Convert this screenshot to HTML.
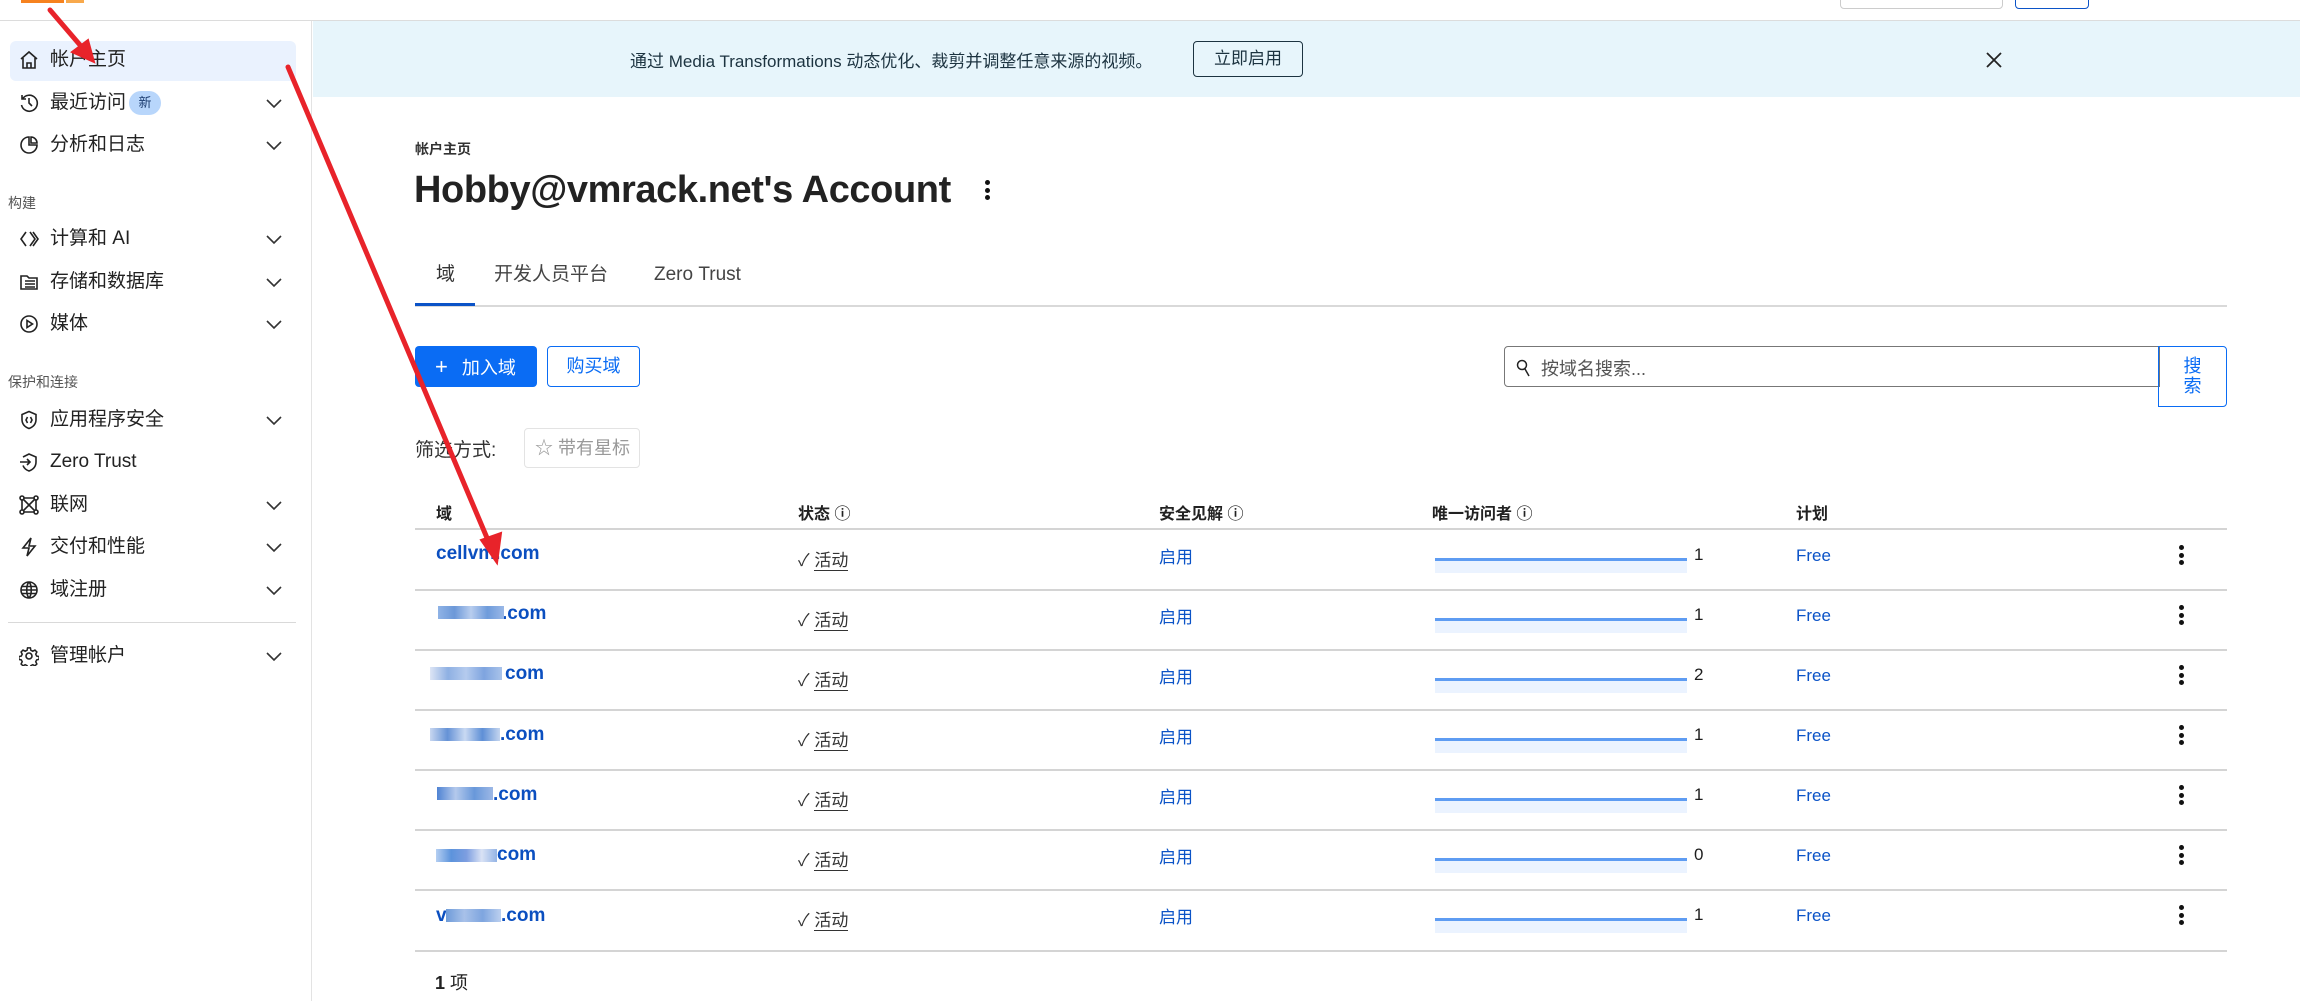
<!DOCTYPE html>
<html><head><meta charset="utf-8">
<style>
*{margin:0;padding:0;box-sizing:border-box}
body{width:2300px;height:1001px;overflow:hidden;background:#fff;font-family:"Liberation Sans","Noto Sans CJK SC",sans-serif;color:#1d1d1d;position:relative}
.a{position:absolute;white-space:nowrap}
.side{position:absolute;left:0;top:21px;width:312px;height:980px;border-right:1px solid #e3e3e3}
.it{position:absolute;left:50px;font-size:19px;line-height:24px;color:#222}
.ic{position:absolute;left:19px;width:20px;height:20px}
.chev{position:absolute;left:266px;width:16px;height:10px}
.sec{position:absolute;left:8px;font-size:14px;color:#555}
.th{font-size:16px;font-weight:600;color:#222;line-height:20px}
.hl{position:absolute;left:415px;width:1812px;height:2px;background:#d4d4d4}
.dom{font-size:19px;font-weight:700;color:#0b4fc0;line-height:24px}
.blu{color:#0b53c7;font-size:17px;line-height:22px}
.spark{position:absolute;left:1435px;width:252px;height:15px;background:#ebf3ff;border-top:3px solid #5e9cf2}
.kb{position:absolute;left:2179px;width:5px}
.kb i{display:block;width:5px;height:5px;border-radius:50%;background:#111;margin-bottom:2.5px}
.pix{position:absolute;height:13px}
.tab{font-size:19px;line-height:26px;top:262px}
</style></head><body>
<div class="a" style="left:21px;top:0;width:43px;height:3px;background:#f6821f"></div>
<div class="a" style="left:66px;top:0;width:18px;height:3px;background:#f8a94c"></div>
<div class="a" style="left:1840px;top:-4px;width:163px;height:13px;border:1px solid #ccc;border-radius:4px"></div>
<div class="a" style="left:2015px;top:-4px;width:74px;height:13px;border:1px solid #0b53c7;border-radius:4px"></div>
<div class="a" style="left:0;top:20px;width:2300px;height:1px;background:#dcdcdc"></div>

<div class="side">
 <div class="a" style="left:10px;top:20px;width:286px;height:40px;background:#eaf2fe;border-radius:6px"></div>
 <svg class="ic" style="top:29px" viewBox="0 0 20 20" fill="none" stroke="#222" stroke-width="1.6"><path d="M2 9L10 2l8 7M4 8v10h12V8M8 18v-5h4v5"/></svg>
 <div class="it" style="top:27px">帐户主页</div>
 <svg class="ic" style="top:72px" viewBox="0 0 20 20" fill="none" stroke="#222" stroke-width="1.6"><path d="M3.5 6A8 8 0 1 1 2.5 12M3 2v4h4M10 5v5l3 3"/></svg>
 <div class="it" style="top:70px">最近访问</div>
 <div class="a" style="left:129px;top:70px;width:32px;height:24px;border-radius:12px;background:#b8d6fb;font-size:13px;color:#1c3d70;text-align:center;line-height:24px">新</div>
 <svg class="ic" style="top:114px" viewBox="0 0 20 20" fill="none" stroke="#222" stroke-width="1.6"><path d="M10 2a8 8 0 1 0 8 8h-8z M12 2v6h6a6 6 0 0 0-6-6z"/></svg>
 <div class="it" style="top:112px">分析和日志</div>
 <div class="sec" style="top:172px">构建</div>
 <svg class="ic" style="top:208px" viewBox="0 0 20 20" fill="none" stroke="#222" stroke-width="1.6"><path d="M7 3L2 10l5 7M11 3l5 7-5 7M14 3l5 7-5 7"/></svg>
 <div class="it" style="top:206px">计算和 AI</div>
 <svg class="ic" style="top:251px" viewBox="0 0 20 20" fill="none" stroke="#222" stroke-width="1.6"><path d="M2 4h6l2 2h8v11H2z M6 9h10M6 12h10M6 15h10"/></svg>
 <div class="it" style="top:249px">存储和数据库</div>
 <svg class="ic" style="top:293px" viewBox="0 0 20 20" fill="none" stroke="#222" stroke-width="1.6"><circle cx="10" cy="10" r="8"/><path d="M8 6.5v7l5.5-3.5z"/></svg>
 <div class="it" style="top:291px">媒体</div>
 <div class="sec" style="top:351px">保护和连接</div>
 <svg class="ic" style="top:389px" viewBox="0 0 20 20" fill="none" stroke="#222" stroke-width="1.6"><path d="M10 1.5l7 3v5c0 4.5-3 7.5-7 9-4-1.5-7-4.5-7-9v-5z M8.5 7l-1.5 3 1.5 3M11.5 7l1.5 3-1.5 3"/></svg>
 <div class="it" style="top:387px">应用程序安全</div>
 <svg class="ic" style="top:431px" viewBox="0 0 20 20" fill="none" stroke="#222" stroke-width="1.6"><path d="M4 5l6-3 7 3v5c0 4.5-3 7.5-7 9-3-1-5-3-6-5.5 M1 10h10M8 7l3 3-3 3"/></svg>
 <div class="it" style="top:429px">Zero Trust</div>
 <svg class="ic" style="top:474px" viewBox="0 0 20 20" fill="none" stroke="#222" stroke-width="1.6"><circle cx="3" cy="3" r="2"/><circle cx="17" cy="3" r="2"/><circle cx="3" cy="17" r="2"/><circle cx="17" cy="17" r="2"/><path d="M5 3h10M3 5v10M17 5v10M5 17h10M4.5 4.5l11 11M15.5 4.5l-11 11"/></svg>
 <div class="it" style="top:472px">联网</div>
 <svg class="ic" style="top:516px" viewBox="0 0 20 20" fill="none" stroke="#222" stroke-width="1.6"><path d="M12 1L4 11h6l-2 8 8-10h-6z"/></svg>
 <div class="it" style="top:514px">交付和性能</div>
 <svg class="ic" style="top:559px" viewBox="0 0 20 20" fill="none" stroke="#222" stroke-width="1.6"><circle cx="10" cy="10" r="8"/><path d="M2 10h16M3 6.5h14M3 13.5h14M10 2c-3 3-3 13 0 16M10 2c3 3 3 13 0 16"/></svg>
 <div class="it" style="top:557px">域注册</div>
 <div class="a" style="left:8px;top:601px;width:288px;height:1px;background:#d9d9d9"></div>
 <svg class="ic" style="top:625px" viewBox="0 0 20 20" fill="none" stroke="#222" stroke-width="1.6"><circle cx="10" cy="10" r="3"/><path d="M8.5 1.5h3l.5 2.5 2 1 2.3-1.2 2 2-1.2 2.3 1 2 2.5.5v3l-2.5.5-1 2 1.2 2.3-2 2-2.3-1.2-2 1-.5 2.5h-3l-.5-2.5-2-1-2.3 1.2-2-2 1.2-2.3-1-2-2.5-.5v-3l2.5-.5 1-2-1.2-2.3 2-2 2.3 1.2 2-1z" transform="scale(.95) translate(.5 .5)"/></svg>
 <div class="it" style="top:623px">管理帐户</div>
 <svg class="chev" style="top:78px" viewBox="0 0 16 10" fill="none" stroke="#333" stroke-width="1.6"><path d="M1 1l7 7 7-7"/></svg>
 <svg class="chev" style="top:120px" viewBox="0 0 16 10" fill="none" stroke="#333" stroke-width="1.6"><path d="M1 1l7 7 7-7"/></svg>
 <svg class="chev" style="top:214px" viewBox="0 0 16 10" fill="none" stroke="#333" stroke-width="1.6"><path d="M1 1l7 7 7-7"/></svg>
 <svg class="chev" style="top:257px" viewBox="0 0 16 10" fill="none" stroke="#333" stroke-width="1.6"><path d="M1 1l7 7 7-7"/></svg>
 <svg class="chev" style="top:299px" viewBox="0 0 16 10" fill="none" stroke="#333" stroke-width="1.6"><path d="M1 1l7 7 7-7"/></svg>
 <svg class="chev" style="top:395px" viewBox="0 0 16 10" fill="none" stroke="#333" stroke-width="1.6"><path d="M1 1l7 7 7-7"/></svg>
 <svg class="chev" style="top:480px" viewBox="0 0 16 10" fill="none" stroke="#333" stroke-width="1.6"><path d="M1 1l7 7 7-7"/></svg>
 <svg class="chev" style="top:522px" viewBox="0 0 16 10" fill="none" stroke="#333" stroke-width="1.6"><path d="M1 1l7 7 7-7"/></svg>
 <svg class="chev" style="top:565px" viewBox="0 0 16 10" fill="none" stroke="#333" stroke-width="1.6"><path d="M1 1l7 7 7-7"/></svg>
 <svg class="chev" style="top:631px" viewBox="0 0 16 10" fill="none" stroke="#333" stroke-width="1.6"><path d="M1 1l7 7 7-7"/></svg>
</div>

<div class="a" style="left:313px;top:21px;width:1987px;height:76px;background:#e7f5fb"></div>
<div class="a" style="left:630px;top:47px;font-size:17px;color:#1c3340">通过 Media Transformations 动态优化、裁剪并调整任意来源的视频。</div>
<div class="a" style="left:1193px;top:41px;width:110px;height:36px;border:1px solid #1c3340;border-radius:4px;font-size:17px;text-align:center;line-height:34px;color:#1c3340">立即启用</div>
<svg class="a" style="left:1985px;top:51px" width="18" height="18" viewBox="0 0 18 18" stroke="#222" stroke-width="1.8"><path d="M2 2l14 14M16 2L2 16"/></svg>

<div class="a" style="left:415px;top:139px;font-size:14px;font-weight:600;color:#333">帐户主页</div>
<div class="a" style="left:414px;top:168px;font-size:38px;line-height:44px;font-weight:700;color:#222;letter-spacing:-0.4px">Hobby@vmrack.net's Account</div>
<div class="kb" style="left:985px;top:180px"><i></i><i></i><i></i></div>

<div class="a tab" style="left:436px;color:#333">域</div>
<div class="a tab" style="left:494px;color:#444">开发人员平台</div>
<div class="a tab" style="left:654px;color:#444">Zero&nbsp;Trust</div>
<div class="a" style="left:415px;top:305px;width:1812px;height:2px;background:#d9d9d9"></div>
<div class="a" style="left:415px;top:303px;width:60px;height:3px;background:#0b53c7"></div>

<div class="a" style="left:415px;top:346px;width:122px;height:41px;background:#0a6cf4;border-radius:4px;color:#fff;font-size:18px;line-height:41px"><span style="margin-left:20px;font-size:22px">+</span><span style="margin-left:14px">加入域</span></div>
<div class="a" style="left:547px;top:346px;width:93px;height:41px;border:1.5px solid #0a6cf4;border-radius:4px;color:#0a6cf4;font-size:18px;line-height:38px;text-align:center">购买域</div>
<div class="a" style="left:1504px;top:346px;width:656px;height:41px;border:1.5px solid #777;border-radius:4px 0 0 4px"></div>
<svg class="a" style="left:1516px;top:359px" width="14" height="18" viewBox="0 0 14 18" fill="none" stroke="#222" stroke-width="1.5"><circle cx="6" cy="6" r="4.5"/><path d="M9 10l4 7"/></svg>
<div class="a" style="left:1541px;top:355px;font-size:18px;color:#555">按域名搜索...</div>
<div class="a" style="left:2158px;top:346px;width:69px;height:61px;border:1.5px solid #0a6cf4;border-radius:0 4px 4px 0;color:#0a6cf4;font-size:18px;text-align:center;line-height:20px;padding-top:9px;white-space:normal">搜<br>索</div>

<div class="a" style="left:415px;top:435px;font-size:19px;color:#333">筛选方式:</div>
<div class="a" style="left:524px;top:428px;width:116px;height:40px;border:1px solid #e3e3e3;border-radius:4px;font-size:18px;color:#999;line-height:38px;padding-left:10px">☆ 带有星标</div>

<div class="a th" style="left:436px;top:505px">域</div>
<div class="a th" style="left:798px;top:505px">状态 ⓘ</div>
<div class="a th" style="left:1159px;top:505px">安全见解 ⓘ</div>
<div class="a th" style="left:1432px;top:505px">唯一访问者 ⓘ</div>
<div class="a th" style="left:1796px;top:505px">计划</div>
<div class="hl" style="top:528px"></div>
<div class="hl" style="top:589px"></div>
<div class="hl" style="top:649px"></div>
<div class="hl" style="top:709px"></div>
<div class="hl" style="top:769px"></div>
<div class="hl" style="top:829px"></div>
<div class="hl" style="top:889px"></div>
<div class="hl" style="top:950px"></div>

<div class="a dom" style="left:436px;top:542px">cellvm.com</div>
<div class="a dom" style="left:502px;top:602px">.com</div>
<div class="pix" style="left:438px;top:606px;width:66px;background:linear-gradient(90deg,#8fb3e6,#6c98d8,#b8cdee,#6e9bdb,#9ab8e7)"></div>
<div class="a dom" style="left:505px;top:662px">com</div>
<div class="pix" style="left:430px;top:667px;width:72px;background:linear-gradient(90deg,#dde5f5,#8eb0e3,#b5cbee,#7ea4df,#a9c3ea)"></div>
<div class="a dom" style="left:500px;top:723px">.com</div>
<div class="pix" style="left:430px;top:728px;width:70px;background:linear-gradient(90deg,#c8d7f0,#6592d6,#c9d9f2,#5e8fd6,#c4d5ef)"></div>
<div class="a dom" style="left:493px;top:783px">.com</div>
<div class="pix" style="left:437px;top:787px;width:56px;background:linear-gradient(90deg,#4f83d3,#b4c9ec,#6898da,#9db8e6)"></div>
<div class="a dom" style="left:497px;top:843px">com</div>
<div class="pix" style="left:436px;top:849px;width:61px;background:linear-gradient(90deg,#b5cff2,#5c93dc,#7d9ee0,#d9e2f5,#94b4e5)"></div>
<div class="a dom" style="left:436px;top:904px">v</div>
<div class="a dom" style="left:501px;top:904px">.com</div>
<div class="pix" style="left:446px;top:909px;width:55px;background:linear-gradient(90deg,#6d9bd9,#a8c1e9,#7ea5df,#bcd0ef)"></div>

<div class="a" style="left:798px;top:546px;font-size:17px;color:#333">✓ <span style="border-bottom:1px solid #333">活动</span></div>
<div class="a" style="left:798px;top:606px;font-size:17px;color:#333">✓ <span style="border-bottom:1px solid #333">活动</span></div>
<div class="a" style="left:798px;top:666px;font-size:17px;color:#333">✓ <span style="border-bottom:1px solid #333">活动</span></div>
<div class="a" style="left:798px;top:726px;font-size:17px;color:#333">✓ <span style="border-bottom:1px solid #333">活动</span></div>
<div class="a" style="left:798px;top:786px;font-size:17px;color:#333">✓ <span style="border-bottom:1px solid #333">活动</span></div>
<div class="a" style="left:798px;top:846px;font-size:17px;color:#333">✓ <span style="border-bottom:1px solid #333">活动</span></div>
<div class="a" style="left:798px;top:906px;font-size:17px;color:#333">✓ <span style="border-bottom:1px solid #333">活动</span></div>

<div class="a blu" style="left:1159px;top:547px">启用</div>
<div class="a blu" style="left:1159px;top:607px">启用</div>
<div class="a blu" style="left:1159px;top:667px">启用</div>
<div class="a blu" style="left:1159px;top:727px">启用</div>
<div class="a blu" style="left:1159px;top:787px">启用</div>
<div class="a blu" style="left:1159px;top:847px">启用</div>
<div class="a blu" style="left:1159px;top:907px">启用</div>

<div class="spark" style="top:558px"></div><div class="a" style="left:1694px;top:545px;font-size:17px">1</div>
<div class="spark" style="top:618px"></div><div class="a" style="left:1694px;top:605px;font-size:17px">1</div>
<div class="spark" style="top:678px"></div><div class="a" style="left:1694px;top:665px;font-size:17px">2</div>
<div class="spark" style="top:738px"></div><div class="a" style="left:1694px;top:725px;font-size:17px">1</div>
<div class="spark" style="top:798px"></div><div class="a" style="left:1694px;top:785px;font-size:17px">1</div>
<div class="spark" style="top:858px"></div><div class="a" style="left:1694px;top:845px;font-size:17px">0</div>
<div class="spark" style="top:918px"></div><div class="a" style="left:1694px;top:905px;font-size:17px">1</div>

<div class="a blu" style="left:1796px;top:545px">Free</div>
<div class="a blu" style="left:1796px;top:605px">Free</div>
<div class="a blu" style="left:1796px;top:665px">Free</div>
<div class="a blu" style="left:1796px;top:725px">Free</div>
<div class="a blu" style="left:1796px;top:785px">Free</div>
<div class="a blu" style="left:1796px;top:845px">Free</div>
<div class="a blu" style="left:1796px;top:905px">Free</div>

<div class="kb" style="top:545px"><i></i><i></i><i></i></div>
<div class="kb" style="top:605px"><i></i><i></i><i></i></div>
<div class="kb" style="top:665px"><i></i><i></i><i></i></div>
<div class="kb" style="top:725px"><i></i><i></i><i></i></div>
<div class="kb" style="top:785px"><i></i><i></i><i></i></div>
<div class="kb" style="top:845px"><i></i><i></i><i></i></div>
<div class="kb" style="top:905px"><i></i><i></i><i></i></div>

<div class="a" style="left:435px;top:969px;font-size:18px;color:#222"><b>1</b> 项</div>

<svg class="a" style="left:0;top:0" width="2300" height="1001">
 <g stroke="#e8232a" stroke-width="5" stroke-linecap="round" fill="#e8232a">
  <line x1="50" y1="10" x2="86" y2="52"/>
  <polygon points="94,62 72,52 88,40" stroke-width="2"/>
  <line x1="288" y1="67" x2="490" y2="545"/>
  <polygon points="497,563 481,540 501,533" stroke-width="2"/>
 </g>
</svg>
</body></html>
